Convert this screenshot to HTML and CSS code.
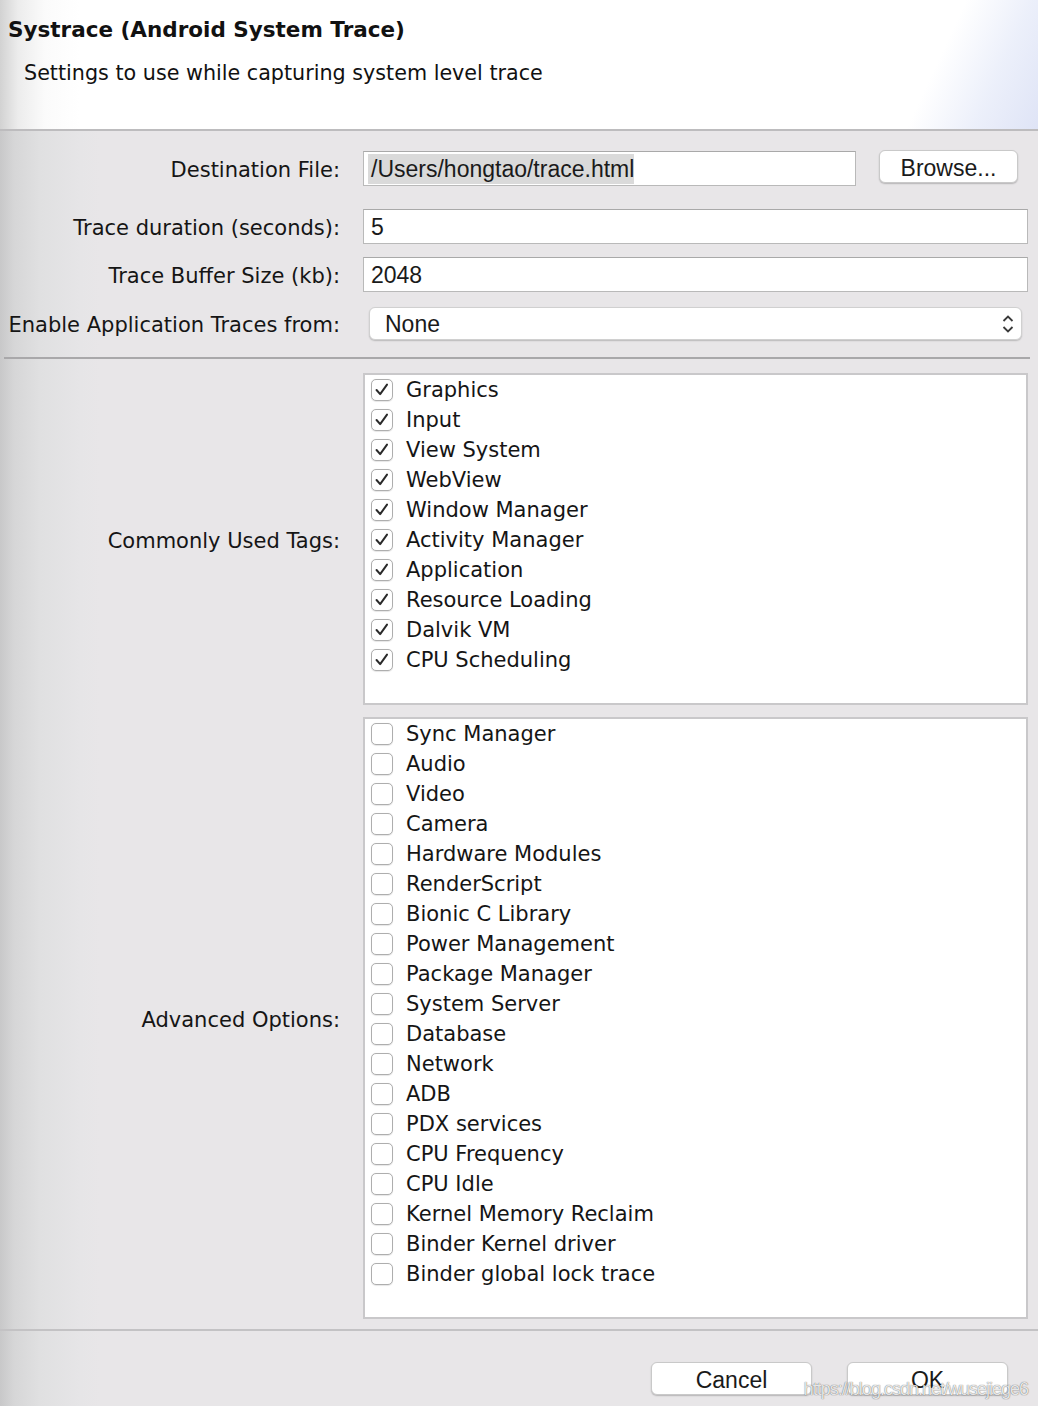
FILE: index.html
```html
<!DOCTYPE html>
<html>
<head>
<meta charset="utf-8">
<link rel="stylesheet" href="styles.css">
</head>
<body>
<div class="dialog">
  <header class="header">
    <h1 class="title">Systrace (Android System Trace)</h1>
    <p class="subtitle">Settings to use while capturing system level trace</p>
  </header>
  <main class="body">
    <div class="row row-file">
      <label class="label">Destination File:</label>
      <div class="field-file">
        <div class="input input-file"><span class="selected">/Users/hongtao/trace.html</span></div>
        <button class="btn btn-browse">Browse...</button>
      </div>
    </div>
    <div class="row row-duration">
      <label class="label">Trace duration (seconds):</label>
      <div class="input">5</div>
    </div>
    <div class="row row-buffer">
      <label class="label">Trace Buffer Size (kb):</label>
      <div class="input">2048</div>
    </div>
    <div class="row row-app">
      <label class="label">Enable Application Traces from:</label>
      <div class="select">
        <span>None</span>
        <svg class="chev" width="14" height="22" viewBox="0 0 14 22"><path d="M2.5 8 L7 3.5 L11.5 8" fill="none" stroke="#3a3a3a" stroke-width="1.8"/><path d="M2.5 14 L7 18.5 L11.5 14" fill="none" stroke="#3a3a3a" stroke-width="1.8"/></svg>
      </div>
    </div>
    <div class="sep"></div>
    <div class="row row-tags">
      <label class="label">Commonly Used Tags:</label>
      <ul class="list list-common">
        <li class="item"><span class="cb on"><svg viewBox="0 0 22 22"><path d="M5 11 L9 15.5 L16.5 5"/></svg></span>Graphics</li>
        <li class="item"><span class="cb on"><svg viewBox="0 0 22 22"><path d="M5 11 L9 15.5 L16.5 5"/></svg></span>Input</li>
        <li class="item"><span class="cb on"><svg viewBox="0 0 22 22"><path d="M5 11 L9 15.5 L16.5 5"/></svg></span>View System</li>
        <li class="item"><span class="cb on"><svg viewBox="0 0 22 22"><path d="M5 11 L9 15.5 L16.5 5"/></svg></span>WebView</li>
        <li class="item"><span class="cb on"><svg viewBox="0 0 22 22"><path d="M5 11 L9 15.5 L16.5 5"/></svg></span>Window Manager</li>
        <li class="item"><span class="cb on"><svg viewBox="0 0 22 22"><path d="M5 11 L9 15.5 L16.5 5"/></svg></span>Activity Manager</li>
        <li class="item"><span class="cb on"><svg viewBox="0 0 22 22"><path d="M5 11 L9 15.5 L16.5 5"/></svg></span>Application</li>
        <li class="item"><span class="cb on"><svg viewBox="0 0 22 22"><path d="M5 11 L9 15.5 L16.5 5"/></svg></span>Resource Loading</li>
        <li class="item"><span class="cb on"><svg viewBox="0 0 22 22"><path d="M5 11 L9 15.5 L16.5 5"/></svg></span>Dalvik VM</li>
        <li class="item"><span class="cb on"><svg viewBox="0 0 22 22"><path d="M5 11 L9 15.5 L16.5 5"/></svg></span>CPU Scheduling</li>
      </ul>
    </div>
    <div class="row row-adv">
      <label class="label">Advanced Options:</label>
      <ul class="list list-adv">
        <li class="item"><span class="cb"></span>Sync Manager</li>
        <li class="item"><span class="cb"></span>Audio</li>
        <li class="item"><span class="cb"></span>Video</li>
        <li class="item"><span class="cb"></span>Camera</li>
        <li class="item"><span class="cb"></span>Hardware Modules</li>
        <li class="item"><span class="cb"></span>RenderScript</li>
        <li class="item"><span class="cb"></span>Bionic C Library</li>
        <li class="item"><span class="cb"></span>Power Management</li>
        <li class="item"><span class="cb"></span>Package Manager</li>
        <li class="item"><span class="cb"></span>System Server</li>
        <li class="item"><span class="cb"></span>Database</li>
        <li class="item"><span class="cb"></span>Network</li>
        <li class="item"><span class="cb"></span>ADB</li>
        <li class="item"><span class="cb"></span>PDX services</li>
        <li class="item"><span class="cb"></span>CPU Frequency</li>
        <li class="item"><span class="cb"></span>CPU Idle</li>
        <li class="item"><span class="cb"></span>Kernel Memory Reclaim</li>
        <li class="item"><span class="cb"></span>Binder Kernel driver</li>
        <li class="item"><span class="cb"></span>Binder global lock trace</li>
      </ul>
    </div>
    <div class="sep-bottom"></div>
    <footer class="footer">
      <button class="btn btn-action">Cancel</button>
      <button class="btn btn-action">OK</button>
      <span class="watermark">https://blog.csdn.net/wusejiege6</span>
    </footer>
  </main>
</div>
</body>
</html>
```
FILE: styles.css
```css
* { box-sizing: border-box; }
html, body { margin: 0; padding: 0; }
body {
  width: 1038px;
  height: 1406px;
  overflow: hidden;
  background: #e8e6e8;
  font-family: "DejaVu Sans", sans-serif;
  color: #111;
}
.dialog { width: 1038px; height: 1406px; display: flex; flex-direction: column; }

.header {
  height: 131px;
  border-bottom: 2px solid #bdbcbe;
  background:
    linear-gradient(115deg, rgba(255,255,255,0) 88%, rgba(234,238,250,0.9) 94%, #dfe4f6 100%),
    linear-gradient(to right, #d2d2d2 0, #ececec 18px, #fbfbfb 45px, #ffffff 80px);
  padding: 14px 0 0 8px;
}
.title {
  margin: 0;
  font-size: 21.5px;
  font-weight: bold;
  line-height: 32px;
  color: #111;
}
.subtitle {
  margin: 13px 0 0 16px;
  font-size: 20.7px;
  line-height: 28px;
  color: #111;
}

.body {
  flex: 1;
  position: relative;
  background: linear-gradient(to right, #c8c8c9 0, #d6d6d7 14px, #e0e0e1 40px, #e6e5e7 80px, #e8e6e8 100px);
  display: flex;
  flex-direction: column;
}

.row {
  display: grid;
  grid-template-columns: 332px 1fr;
  column-gap: 23px;
  align-items: center;
  padding: 0 10px 0 8px;
}
.label {
  text-align: right;
  font-size: 21px;
  white-space: nowrap;
  color: #151515;
  padding-top: 3px;
}
.row-file { margin-top: 19px; height: 36px; }
.row-duration { margin-top: 23px; height: 35px; }
.row-buffer { margin-top: 13px; height: 35px; }
.row-app { margin-top: 15px; height: 33px; }

.field-file { display: flex; align-items: center; gap: 23px; height: 36px; }
.input {
  height: 35px;
  background: #fff;
  border: 1px solid #b9b9b9;
  border-top-color: #a9a9a9;
  font-family: "Liberation Sans", sans-serif;
  font-size: 23px;
  line-height: 33px;
  padding-left: 7px;
  padding-top: 1px;
  color: #1a1a1a;
}
.input-file { width: 493px; margin-top: 1px; padding-left: 4px; padding-top: 2px; line-height: 30px; }
.selected { background: #dadada; padding: 1px 0 0 3px; display: inline-block; line-height: 29px; }

.btn {
  font-family: "Liberation Sans", sans-serif;
  font-size: 23px;
  color: #1a1a1a;
  background: #fff;
  border: 1px solid #c9c9c9;
  border-radius: 6px;
  box-shadow: 0 1px 1.5px rgba(0,0,0,0.22);
  padding: 2px 0 0;
  height: 33px;
  line-height: 31px;
}
.btn-browse { width: 139px; align-self: flex-start; }

.select {
  margin: 0 6px;
  height: 33px;
  background: #fff;
  border-radius: 6px;
  border: 1px solid #d0d0d0;
  box-shadow: 0 1px 1.5px rgba(0,0,0,0.2);
  display: flex;
  align-items: center;
  justify-content: space-between;
  padding: 2px 6px 0 15px;
  font-family: "Liberation Sans", sans-serif;
  font-size: 23px;
  color: #1a1a1a;
}
.chev { display: block; margin-top: -2px; }

.sep {
  margin: 17px 8px 0 4px;
  height: 2px;
  background: #a9a8aa;
}

.row-tags { margin-top: 14px; height: 332px; }
.row-adv { margin-top: 12px; height: 602px; }

.list {
  list-style: none;
  margin: 0;
  height: 100%;
  background: #fff;
  border: 2px solid #c9c8ca;
  padding: 0 6px;
}
.item {
  display: flex;
  align-items: center;
  height: 30px;
  font-size: 21px;
  color: #151515;
  white-space: nowrap;
}
.cb {
  flex: none;
  width: 22px;
  height: 22px;
  border: 1px solid #aeaeae;
  border-radius: 5px;
  background: #fff;
  margin-right: 13px;
  box-shadow: 0 0.5px 1px rgba(0,0,0,0.1);
}
.cb svg { display: block; width: 20px; height: 20px; }
.cb svg path { fill: none; stroke: #2a2a2a; stroke-width: 2.2; stroke-linecap: round; stroke-linejoin: round; }

.sep-bottom {
  margin-top: 10px;
  height: 2px;
  background: #c3c2c4;
}

.footer {
  position: relative;
  display: flex;
  justify-content: flex-end;
  gap: 35px;
  padding: 31px 30px 0 0;
}
.btn-action { width: 161px; }
.watermark {
  position: absolute;
  right: 10px;
  top: 48px;
  font-family: "Liberation Sans", sans-serif;
  font-size: 18px;
  letter-spacing: -1px;
  color: rgba(255,255,255,0.85);
  text-shadow: 0 0 1px rgba(0,0,0,0.5), 0 0 1px rgba(0,0,0,0.3);
}
```
